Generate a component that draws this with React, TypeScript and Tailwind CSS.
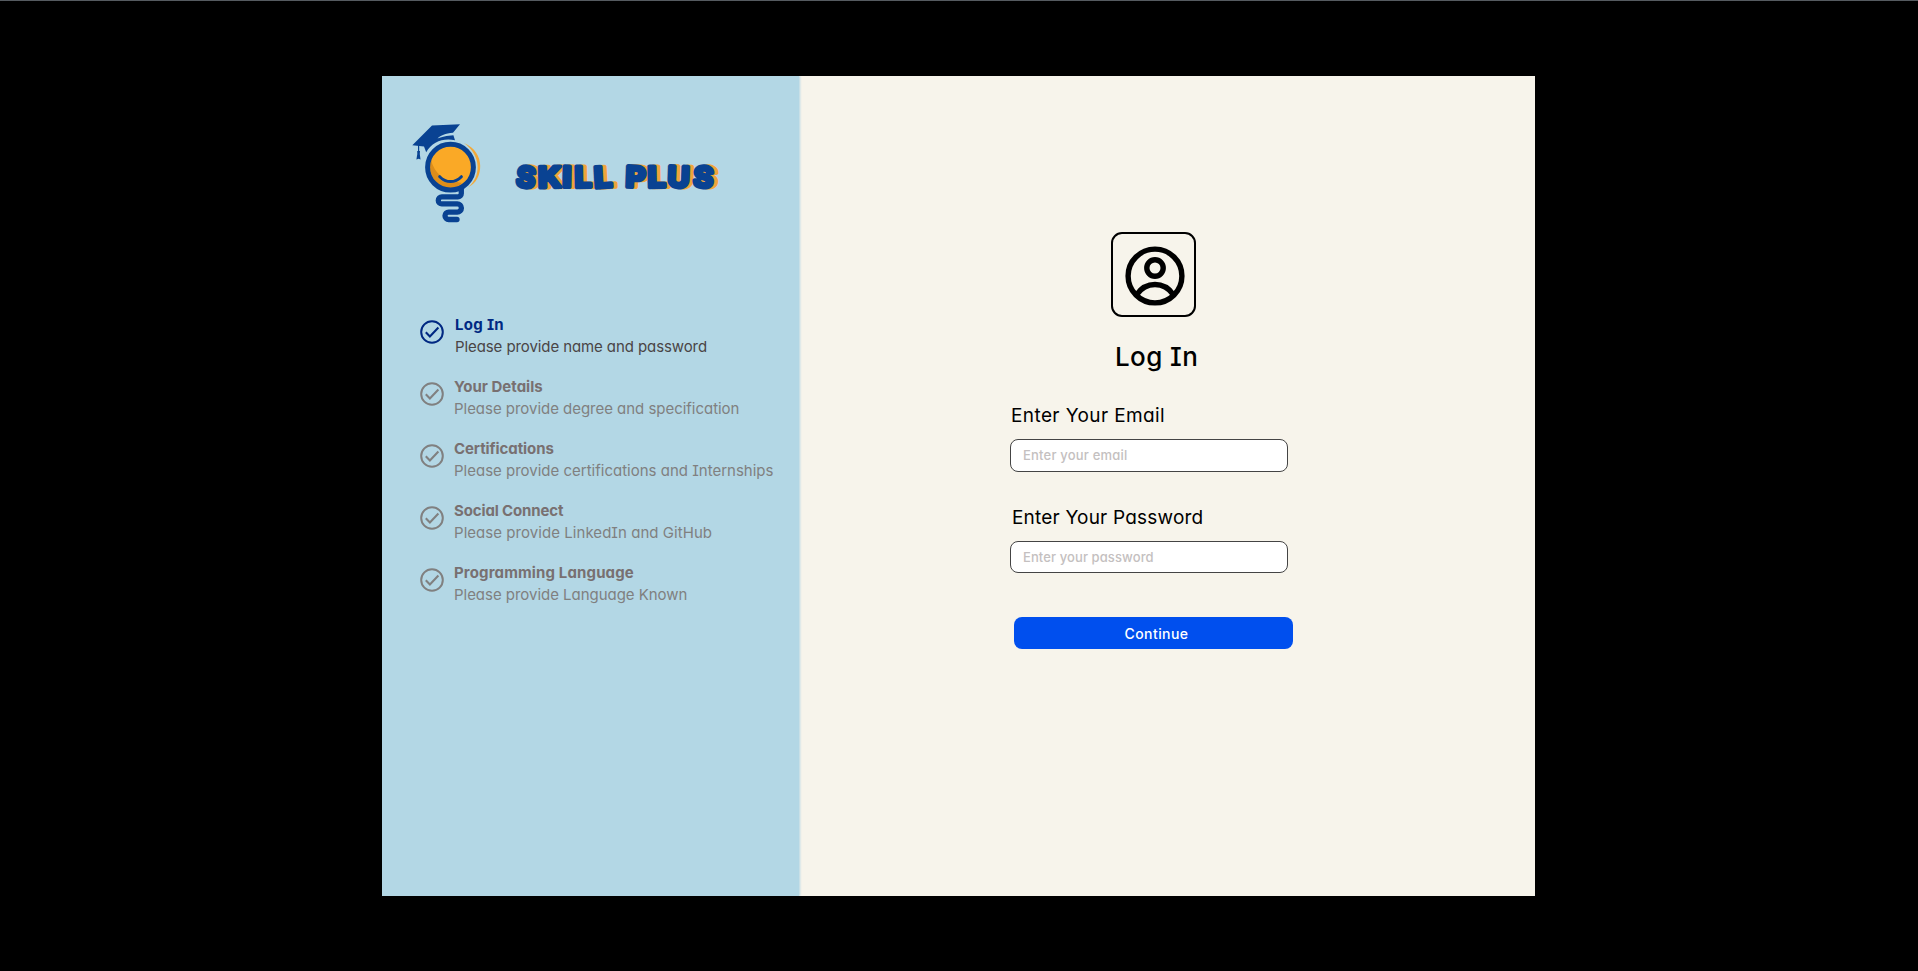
import React from "react";

type Step = {
  title: string;
  text: string;
  titleClass: string;
  textClass: string;
  active?: boolean;
};

const steps: Step[] = [
  { title: "Log In", text: "Please provide name and password", titleClass: "tracking-[0.3px]", textClass: "tracking-[-0.09px]", active: true },
  { title: "Your Details", text: "Please provide degree and specification", titleClass: "tracking-[0px]", textClass: "tracking-[-0.03px]" },
  { title: "Certifications", text: "Please provide certifications and Internships", titleClass: "tracking-[-0.08px]", textClass: "tracking-[0px]" },
  { title: "Social Connect", text: "Please provide LinkedIn and GitHub", titleClass: "tracking-[-0.13px]", textClass: "tracking-[0.05px]" },
  { title: "Programming Language", text: "Please provide Language Known", titleClass: "tracking-[0.14px]", textClass: "tracking-[-0.03px]" },
];

const wordmark: { ch: string; x: number; w: number; tilt: number }[] = [
  { ch: "S", x: 116.5, w: 19, tilt: 6 },
  { ch: "K", x: 138, w: 23, tilt: -1 },
  { ch: "I", x: 162.5, w: 9, tilt: 1 },
  { ch: "L", x: 174.5, w: 17, tilt: -1 },
  { ch: "L", x: 194, w: 18, tilt: -3 },
  { ch: "P", x: 225.5, w: 20, tilt: 2 },
  { ch: "L", x: 247.5, w: 18, tilt: -1 },
  { ch: "U", x: 267.5, w: 22, tilt: 2 },
  { ch: "S", x: 293.5, w: 20, tilt: 4 },
];

function Wordmark({ color, dx }: { color: string; dx: number }) {
  return (
    <g
      fill={color}
      stroke={color}
      strokeWidth="4"
      strokeLinejoin="round"
      fontFamily="Inter, sans-serif"
      fontWeight="700"
      fontSize="28.5"
    >
      {wordmark.map((l, i) => (
        <text
          key={i}
          x={l.x + dx}
          y="77.2"
          textLength={l.w}
          lengthAdjust="spacingAndGlyphs"
          transform={`rotate(${l.tilt} ${l.x + dx + l.w / 2} 67)`}
        >
          {l.ch}
        </text>
      ))}
    </g>
  );
}

function Logo() {
  return (
    <svg width="330" height="120" viewBox="0 0 330 120" className="block [font-feature-settings:normal]">
      <path d="M64 33C86 42 84 70 68 77.5C81 67 82 46 64 33Z" fill="#f2a93a" />
      <circle cx="50.5" cy="57.2" r="23" fill="#faa926" />
      <path d="M31.5 49C35 62 45 70 62 73C55 80 45 79 38 73.5C31 67 29 58 31.5 49Z" fill="#dd8d1a" />
      <path d="M31 46C35 60 46 69 62 69C55 75 45 74 38 68C34 62 31 55 31 46Z" fill="#faa926" />
      <path d="M31 50C33 57 36 62 41 66L36 72C31 66 29 58 31 50Z" fill="#dd8d1a" />
      <circle cx="50.5" cy="57.2" r="22.9" fill="none" stroke="#094292" strokeWidth="5" />
      <path d="M39.7 66.7C46 73.2 55 73.2 61.4 66.7" fill="none" stroke="#094292" strokeWidth="3" strokeLinecap="round" />
      <path d="M12.3 35.2L32 15.6L60 14.2L53 22.8C45 23.6 41 25.2 37.5 28.6C41 27 47 25.4 53.4 25.2L55 30.2C43 27.6 32 32 26.2 42.2L24 36.6Z" fill="#094292" />
      <path d="M18.6 34V42" stroke="#094292" strokeWidth="1.2" />
      <path d="M17.2 41H20L19.8 44L20.5 49.6L18.7 48.8L16.4 49.6L17.3 44Z" fill="#094292" />
      <path
        d="M61.8 79.5V84A3.4 3.4 0 0 1 58.4 87.4H42.3A3.5 3.5 0 0 0 42.3 94.4H57.8A4.1 4.1 0 0 1 57.8 102.6H49.2A3.7 3.7 0 0 0 49.2 110H57.5"
        transform="translate(-0.5 -0.5)"
        fill="none"
        stroke="#094292"
        strokeWidth="5.3"
        strokeLinecap="round"
      />
      <Wordmark color="#eda53c" dx={4.2} />
      <Wordmark color="#094292" dx={0} />
    </svg>
  );
}

function CheckIcon() {
  return (
    <svg width="24" height="24" viewBox="0 0 24 24" fill="none" stroke="currentColor" strokeWidth="2" className="shrink-0">
      <circle cx="12" cy="12" r="10.8" />
      <path d="M5.8 12.3L9.9 16.4L18.4 7.6" strokeWidth="2.1" />
    </svg>
  );
}

function ProfileIcon() {
  return (
    <svg width="60" height="60" viewBox="0 0 60 60" fill="none" stroke="#000" strokeWidth="5.4">
      <circle cx="30" cy="30" r="26.9" />
      <circle cx="30" cy="22" r="8.2" />
      <path d="M11.8 48.5C21 35.2 39 35.2 48.2 48.5" />
    </svg>
  );
}

export default function App() {
  return (
    <div className="flex h-[971px] w-full border-t border-[#555b60] bg-black pl-[382px] pt-[75px] font-['Inter',sans-serif] [font-feature-settings:'cv11','cv08']">
      <main className="flex h-[820px] w-[1153px] overflow-hidden bg-[#f7f4eb]">
        <aside className="h-full w-[417px] shrink-0 bg-[#b3d7e5] pl-[18px] pt-[34px] shadow-[1px_0_2px_#b3d7e5]">
          <Logo />
          <ul className="mt-[84px] flex flex-col gap-[18px] pl-5">
            {steps.map((s) => (
              <li key={s.title} className={`flex h-[44px] ${s.active ? "gap-[11px] text-[#002882]" : "gap-[10px] text-[#808080]"}`}>
                <div className="pt-[6px]">
                  <CheckIcon />
                </div>
                <div className="whitespace-nowrap text-[15px] leading-[22px]">
                  <h2 className={`font-bold ${s.active ? "" : "text-[#787071]"} ${s.titleClass}`}>{s.title}</h2>
                  <p className={`${s.active ? "text-[#4a4546]" : ""} ${s.textClass}`}>{s.text}</p>
                </div>
              </li>
            ))}
          </ul>
        </aside>
        <section className="flex flex-1 flex-col pl-[211px] pt-[156px] text-black">
          <div className="ml-[101px] flex size-[85px] items-center justify-center rounded-[11px] border-2 border-black pl-0.5 pt-[3px]">
            <ProfileIcon />
          </div>
          <h1 className="ml-[105px] mt-[22px] whitespace-nowrap text-[26px] font-medium leading-9 tracking-[0.4px]">Log In</h1>
          <form className="flex w-[284px] flex-col">
            <label htmlFor="email" className="ml-px mt-[27px] whitespace-nowrap text-[19px] leading-7 tracking-[0.4px]">Enter Your Email</label>
            <input
              id="email"
              type="email"
              placeholder="Enter your email"
              className="mt-[9px] h-[33px] w-[278px] rounded-lg border border-[#444] bg-white px-[12px] pb-0.5 text-[13px] font-medium tracking-[0.2px] outline-none placeholder:text-[#c4c0c0]"
            />
            <label htmlFor="password" className="ml-0.5 mt-[32px] whitespace-nowrap text-[19px] leading-7 tracking-[0.2px]">Enter Your Password</label>
            <input
              id="password"
              type="password"
              placeholder="Enter your password"
              className="mt-[9px] h-[32px] w-[278px] rounded-lg border border-[#444] bg-white px-[12px] text-[13px] font-medium tracking-[0.1px] outline-none placeholder:text-[#c4c0c0]"
            />
            <button type="button" className="ml-[4px] mt-[44px] h-[32px] w-[279px] rounded-lg bg-[#004fee] pl-[6px] text-[14px] font-medium tracking-[0.45px] text-white">
              Continue
            </button>
          </form>
        </section>
      </main>
    </div>
  );
}
